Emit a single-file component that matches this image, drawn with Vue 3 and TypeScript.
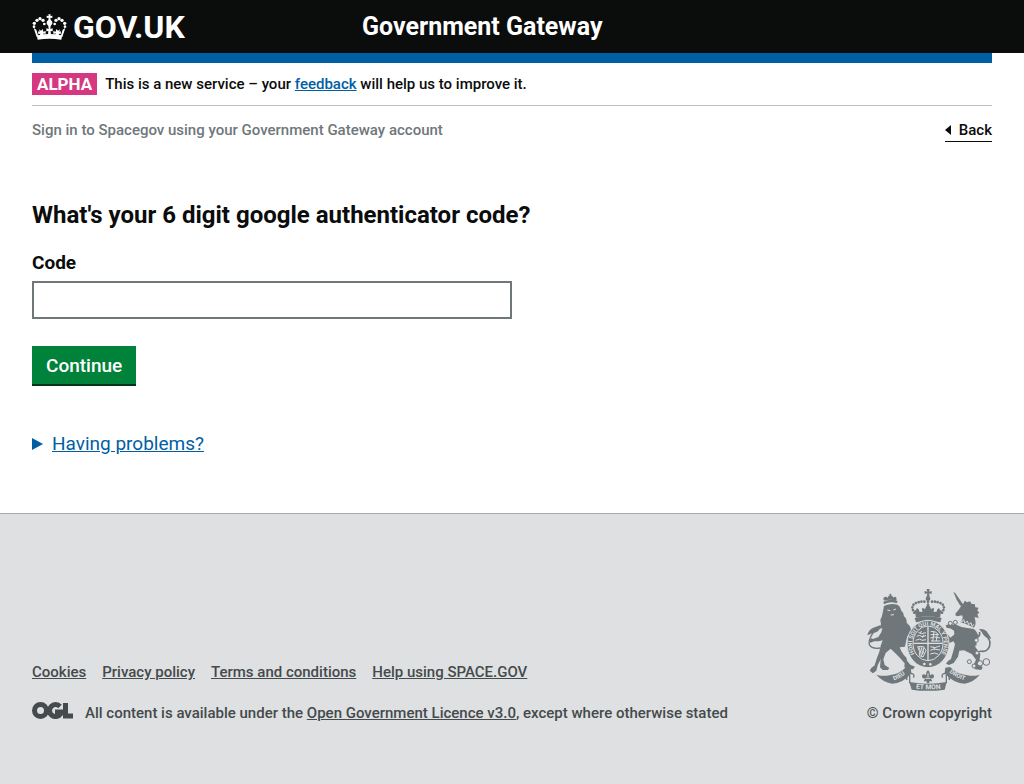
<script setup lang="ts">
import { ref } from 'vue'

interface FooterLink {
  label: string
  href: string
}

const code = ref<string>('')

const footerLinks: FooterLink[] = [
  { label: 'Cookies', href: '#cookies' },
  { label: 'Privacy policy', href: '#privacy' },
  { label: 'Terms and conditions', href: '#terms' },
  { label: 'Help using SPACE.GOV', href: '#help' },
]
</script>

<template>
  <div class="page">
    <header class="header">
      <div class="header-inner">
        <a class="logo" href="#home">
          <svg class="crown" viewBox="36 38 105 78" aria-hidden="true">
            <g fill="#fff">
              <path d="M85 39h7l-1 5 6-1v7l-6-1 1 7q7 4 5 11l-5 7h-7l-5-7q-2-7 5-11l1-7-6 1v-7l6 1z" />
              <circle cx="69" cy="57" r="5" /><circle cx="60" cy="52" r="5" /><circle cx="51" cy="57" r="5" />
              <circle cx="43" cy="66" r="5" /><circle cx="42" cy="76" r="4" /><circle cx="73" cy="68" r="4" />
              <circle cx="108" cy="57" r="5" /><circle cx="117" cy="52" r="5" /><circle cx="126" cy="57" r="5" />
              <circle cx="134" cy="66" r="5" /><circle cx="135" cy="76" r="4" /><circle cx="104" cy="68" r="4" />
              <path d="M51 105Q88 97 126 105l-2 10Q88 109 53 115z" />
              <path d="M41 80l8 5 5 17Q88 94 123 102l5-17 8-5-9 27Q88 98 50 107z" />
              <path d="M57 84l6 4 5-5 2 8 7-2v9l-7-2 1 6-10 1-1-6-5 2-1-9 5 1zM120 84l-6 4-5-5-2 8-7-2v9l7-2-1 6 10 1 1-6 5 2 1-9-5 1zM85 74h7l-1 9 7-2v9l-6-1 1 11H84l1-11-6 1v-9l7 2z" />
            </g>
          </svg>
          <span>GOV.UK</span>
        </a>
        <div class="service-name">Government Gateway</div>
      </div>
    </header>

    <div class="container">
      <div class="phase-banner">
        <strong class="phase-tag">ALPHA</strong>
        <span>This is a new service – your <a href="#feedback">feedback</a> will help us to improve it.</span>
      </div>
      <div class="context-row">
        <span class="context">Sign in to Spacegov using your Government Gateway account</span>
        <a class="back" href="#back">Back</a>
      </div>

      <main>
        <h1>What's your 6 digit google authenticator code?</h1>
        <form @submit.prevent>
          <label for="code">Code</label>
          <input id="code" v-model="code" type="text" inputmode="numeric" autocomplete="one-time-code" />
          <button type="submit">Continue</button>
        </form>
        <details>
          <summary><span>Having problems?</span></summary>
        </details>
      </main>
    </div>

    <footer class="footer">
      <div class="footer-inner">
        <div class="footer-meta">
          <nav class="footer-links">
            <a v-for="link in footerLinks" :key="link.label" :href="link.href">{{ link.label }}</a>
          </nav>
          <div class="licence">
            <svg class="ogl" viewBox="0 0 41 17" role="img" aria-label="Open Government Licence">
              <g fill="none" stroke="#454a4c" stroke-width="5">
                <circle cx="8.500" cy="8.500" r="6" />
                <path d="M28 4.500A6 6 0 1 0 28.500 12V10H23" />
                <path d="M33.500 1V14H41" />
              </g>
            </svg>
            <span>All content is available under the <a href="#ogl">Open Government Licence v3.0</a>, except where otherwise stated</span>
          </div>
        </div>
        <div class="crown-copyright">
          <svg class="arms" viewBox="21 24 375 309" aria-hidden="true">
            <defs>
              <path id="garter" d="M170 230A48 55 0 1 1 238 230" />
              <path id="ribbon-left" d="M84 306Q120 300 150 270" />
              <path id="ribbon-mid" d="M156 325Q204 331 254 325" />
              <path id="ribbon-right" d="M257 268Q288 298 328 304" />
            </defs>
            <g fill="#6f777b">
              <!-- lion -->
              <path d="M72 73Q91 62 110 70l3-7Q91 55 70 65z" />
              <path d="M74 62Q66 56 74 51q6-3 9 3 1-8 8-8 8 0 8 8 4-6 9-2 5 5-1 10Q90 56 74 62z" />
              <circle cx="91" cy="44" r="3" />
              <path d="M72 78Q92 68 112 74q10 6 11 17 9 8 9 18 9 7 8 19 11 8 13 20l3 15-13 4-4 13-4 20-16 2q4 12 12 22 10 8 10 18l10 12 14 6-6 8h-18l-8-8 1-10-14-16-20-20-8-8-16 14q-12 9-15 20l-8 16-4 16-10 8-10-8 5-8 10-8 6-20 8-21 4-18 6-16-12 3-13 0-12 4-5-7 9-6 4 2 16-6 9-14 3-12-9 1 5-13-2-13 5-12z" />
              <path d="M78 216l-8 22 4 17 14 9-4 6H68l-8-8 2-24 4-18z" />
              <path d="M22 166q3-16 18-23 10-3 22-8-2 18-14 22-16 4-26 9z" />
              <path d="M44 152Q24 178 28 194q8 14 32 10" fill="none" stroke="#6f777b" stroke-width="4" />
              <path d="M82 90l9 2M100 90l8-3M92 105l10-1" stroke="#dee0e2" stroke-width="3" />
              <!-- crown -->
              <path d="M200 27h9l-2 8 8-2v9l-8-2 2 10h-9l2-10-8 2v-9l8 2z" />
              <circle cx="204" cy="56" r="7" />
              <path d="M166 101l-5-10q8 3 9-6 8 1 7 9 6 4 10 1l-1-12 9 4 4-9h10l4 9 9-4-1 12q4 3 10-1-1-8 7-9 1 9 9 6l-5 10-2 12Q204 104 168 113z" />
              <path d="M164 114Q204 104 245 114l-4 13Q204 117 168 127z" />
              <g fill="none" stroke="#6f777b" stroke-width="8" stroke-linecap="round" stroke-dasharray="0.1 8.5">
                <path d="M163 98Q150 78 166 70q18-8 32-4" />
                <path d="M246 98Q259 78 243 70q-18-8-32-4M204 66v32" />
              </g>
              <!-- unicorn -->
              <path d="M280 35l6 5 23 33-8 4-11-18z" />
              <path d="M305 73q-3 10-9 16l-10 12q-1 7 6 8l14-3q4 4 1 12l-6 8 22 8 18 9q8-8 5-20l-2-12 12 3-4-12 6-3-6-8 4-8-10-1-2-10-9 0-5-8-8 3-8-5-3 8z" />
              <path d="M280 129Q300 144 341 146q12 10 14 24 0 14-10 22-1 10 6 16l10 14-2 16-3 14 12 10-4 8-18-2-7-9 9-20-12-16-24-12-14 1-4 18-13 19-14 6-9-4 6-8 9-6 8-28 4-16-6-12 4-20z" />
              <path d="M290 166l-6 16-16 7-11-17-1-11 7 2 8 10 14-11zM282 152q-10-10-22-8l-3-8 14-5 20 8z" />
              <path d="M357 148q12-3 22 5 9 12 15 23-14 0-24-12-5-9-13-16z" />
              <path d="M348 196q-6-16 4-24 10-7 6-16M372 160q16 14 18 28-1 24-20 26-12-1-12 2" fill="none" stroke="#6f777b" stroke-width="5" />
              <g fill="#dee0e2" stroke="#6f777b" stroke-width="3">
                <circle cx="271" cy="130" r="6" /><circle cx="286" cy="127" r="6" />
                <circle cx="349" cy="181" r="6" /><circle cx="351" cy="219" r="6" />
                <circle cx="328" cy="245" r="6" /><circle cx="342" cy="258" r="6" />
                <circle cx="360" cy="250" r="8" /><circle cx="379" cy="246" r="10" />
              </g>
              <path d="M300 116l5 10 6-7 4 11 7-7 4 11 7-6 3 11 7-6M297 130Q317 140 341 145" stroke="#dee0e2" stroke-width="3" fill="none" />
              <!-- garter and shield -->
              <ellipse cx="204" cy="192" rx="63" ry="71" stroke="#dee0e2" stroke-width="3" />
              <ellipse cx="204" cy="190" rx="45" ry="52" stroke="#dee0e2" stroke-width="3" />
              <path d="M204 140V240M161 190H248" stroke="#dee0e2" stroke-width="4" />
              <g stroke="#dee0e2" stroke-width="3" fill="none">
                <path d="M175 157l9 4 14-3M170 169l9-3 7 4 12-3M167 181l12-4 7 4 12-2M184 153l-3 8M191 164l-4 9" />
                <path d="M212 154l15 2 9 9M212 164h23M211 174q12-6 29 0M213 183h28M222 155l-4 29M232 160l-3 23" />
                <path d="M173 200h18l7 12-9 19-11-4q4-11-5-27zM178 202l7 27M184 202l4 22M190 203v17" />
                <path d="M211 200l13 3 16-5M211 211l12-4 17 3M211 222l13-3 11 4M221 200l3 9" />
              </g>
              <circle cx="193" cy="252" r="4" fill="#dee0e2" /><circle cx="211" cy="253" r="4" fill="#dee0e2" />
              <!-- motto ribbon -->
              <path d="M49 284Q68 290 88 286 120 282 138 261l14 2 2 16Q130 310 96 311 68 306 49 284z" />
              <path d="M359 284Q340 290 322 286 290 282 270 261l-14 2-2 16Q280 310 314 311 342 306 359 284z" />
              <path d="M148 306Q204 317 260 306l-6 23Q204 336 155 329z" />
              <path d="M140 300q-1-20 14-20 12 3 6 13M268 300q1-20-14-20-12 3-6 13M149 284v26M259 284v26" fill="none" stroke="#6f777b" stroke-width="4" />
              <path d="M204 270q8 7 6 15 12-6 12 4 0 9-10 6l5 9h-9v6h-8v-6h-9l5-9q-10 3-10-6 0-10 12-4-2-8 6-15z" />
              <path d="M197 295h14M204 280v12" stroke="#dee0e2" stroke-width="3" />
            </g>
            <g class="motto">
              <text font-size="17"><textPath href="#garter" startOffset="50%">HONI SOIT QUI MAL Y PENSE</textPath></text>
              <text font-size="18"><textPath href="#ribbon-left" startOffset="50%">DIEU</textPath></text>
              <text font-size="20"><textPath href="#ribbon-mid" startOffset="50%">ET MON</textPath></text>
              <text font-size="18"><textPath href="#ribbon-right" startOffset="50%">DROIT</textPath></text>
            </g>
          </svg>
          <a href="#crown-copyright">© Crown copyright</a>
        </div>
      </div>
    </footer>
  </div>
</template>

<style>
body {
  margin: 0;
  background: #fff;
}
</style>

<style scoped>
.page {
  display: flex;
  flex-direction: column;
  min-height: 100vh;
  color: #0b0c0c;
  font-family: Roboto, "Liberation Sans", sans-serif;
  font-size: 15px;
  font-weight: 500;
  line-height: 20px;
}
.header {
  background: #0b0c0c;
  color: #fff;
}
.header-inner {
  display: grid;
  grid-template-columns: 1fr 2fr;
  align-items: center;
  height: 53px;
  padding: 0 32px;
}
.logo {
  display: flex;
  align-items: center;
  gap: 6px;
  color: #fff;
  font-size: 32px;
  font-weight: 700;
  line-height: 36px;
  text-decoration: none;
}
.crown {
  width: 35px;
  height: 26px;
}
.service-name {
  padding-left: 10px;
  font-size: 25px;
  font-weight: 700;
  line-height: 32px;
}
.container {
  margin: 0 32px;
  border-top: 10px solid #005ea5;
}
.phase-banner {
  display: flex;
  align-items: center;
  gap: 8px;
  padding: 10px 0;
  border-bottom: 1px solid #bfc1c3;
}
.phase-tag {
  padding: 1px 5px;
  background: #d53880;
  color: #fff;
  font-size: 17px;
  font-weight: 700;
}
.phase-banner a {
  color: #005ea5;
}
.context-row {
  display: flex;
  justify-content: space-between;
  padding-top: 14px;
}
.context {
  color: #6f777b;
}
.back {
  display: flex;
  align-items: center;
  gap: 8px;
  padding-bottom: 1px;
  border-bottom: 1px solid #0b0c0c;
  color: #0b0c0c;
  text-decoration: none;
}
.back::before {
  content: "";
  border: solid transparent;
  border-width: 5px 6px 5px 0;
  border-right-color: #0b0c0c;
}
h1 {
  margin: 58px 0 0;
  font-size: 24px;
  font-weight: 700;
  line-height: 30px;
}
form {
  display: flex;
  flex-direction: column;
  align-items: flex-start;
}
label {
  margin-top: 20px;
  font-size: 19px;
  font-weight: 700;
  line-height: 25px;
}
input {
  box-sizing: border-box;
  width: 50%;
  height: 38px;
  margin: 6px 0 27px;
  padding: 5px 6px;
  border: 2px solid #6f777b;
  border-radius: 0;
  background: #fff;
  color: #0b0c0c;
  font: inherit;
  font-size: 19px;
}
button {
  padding: 8px 14px 6px;
  border: 0;
  border-bottom: 2px solid #003618;
  background: #00823b;
  color: #fff;
  font: inherit;
  font-size: 19px;
  line-height: 24px;
}
details {
  margin: 45px 0 57px;
}
summary {
  display: flex;
  align-items: center;
  gap: 9px;
  width: fit-content;
  color: #005ea5;
  cursor: pointer;
  font-size: 19px;
  font-weight: 400;
  line-height: 25px;
  text-decoration: underline;
}
summary::before {
  content: "";
  border: solid transparent;
  border-width: 6px 0 6px 11px;
  border-left-color: #005ea5;
}
.footer {
  flex: 1;
  border-top: 1px solid #a1acb2;
  background: #dee0e2;
  color: #454a4c;
}
.footer a {
  color: #454a4c;
}
.footer-inner {
  display: flex;
  align-items: flex-end;
  justify-content: space-between;
  padding: 74px 32px 60px;
}
.footer-meta {
  display: flex;
  flex-direction: column;
  gap: 20px;
}
.footer-links {
  display: flex;
  flex-wrap: wrap;
  gap: 16px;
}
.licence {
  display: flex;
  align-items: center;
  gap: 12px;
}
.ogl {
  width: 41px;
  height: 17px;
  margin-bottom: 4px;
}
.crown-copyright {
  display: flex;
  flex-direction: column;
  align-items: flex-end;
  gap: 12px;
}
.crown-copyright a {
  text-decoration: none;
}
.arms {
  width: 125px;
  height: 103px;
  overflow: visible;
}
.motto {
  fill: #dee0e2;
  font-weight: 700;
  text-anchor: middle;
}
</style>
